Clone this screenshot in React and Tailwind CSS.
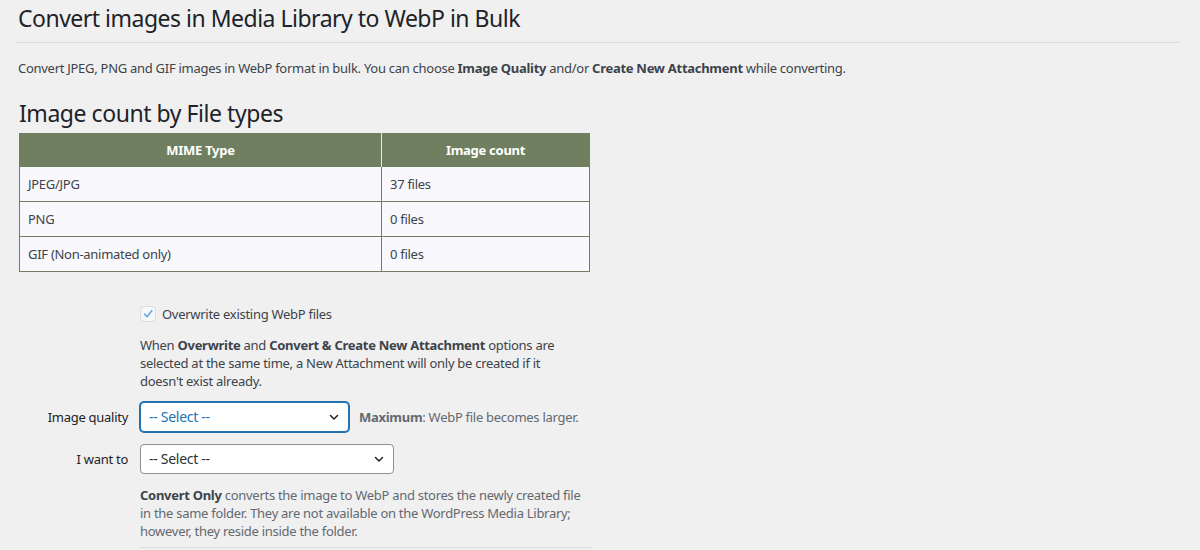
import React from 'react';

const rows = [
    { type: 'JPEG/JPG', count: '37 files' },
    { type: 'PNG', count: '0 files' },
    { type: 'GIF (Non-animated only)', count: '0 files' }
];

const Chevron = () => (
    <svg width="12" height="12" viewBox="0 0 12 12" className="absolute right-[8px] top-1/2 -translate-y-1/2">
        <path d="M2.5 4.5 L6 8 L9.5 4.5" fill="none" stroke="#1d2327" strokeWidth="1.5" strokeLinecap="round" strokeLinejoin="round" />
    </svg>
);

const SelectBox = ({ width, focused }) => (
    <div
        className={`relative h-[30px] ${width} rounded-[4px] bg-white flex items-center pl-[8px] text-[14px] ${
            focused ? 'border border-[#2271b1] shadow-[0_0_0_1px_#2271b1] text-[#2271b1]' : 'border border-[#8c8f94] text-[#2c3338]'
        }`}
    >
        -- Select --
        <Chevron />
    </div>
);

export default function App() {
    return (
        <div className="min-h-[550px] bg-[#f0f0f1] text-[#3c434a] text-[13px] leading-[18px] tracking-[-0.28px] font-['Noto_Sans',sans-serif] pl-[18px] pr-[20px]">
            <h1 className="pt-[4px] text-[23px] leading-[29px] tracking-[-0.5px] text-[#1d2327]">
                Convert images in Media Library to WebP in Bulk
            </h1>
            <hr className="mt-[9px] -ml-[3px] border-0 border-t border-[#dcdcde]" />
            <p className="mt-[16px]">
                Convert JPEG, PNG and GIF images in WebP format in bulk. You can choose <b>Image Quality</b> and/or{' '}
                <b>Create New Attachment</b> while converting.
            </p>

            <h2 className="mt-[22px] ml-[1px] text-[23px] leading-[29px] tracking-[-0.45px] text-[#1d2327]">Image count by File types</h2>

            <table className="mt-[5px] ml-[1px] w-[571px] border-collapse border border-[#6f7f5f]">
                <thead>
                    <tr className="bg-[#6f7f5f] text-white h-[33px]">
                        <th className="w-[362px] border-r border-[#e8ebe3] font-bold text-center">MIME Type</th>
                        <th className="font-bold text-center">Image count</th>
                    </tr>
                </thead>
                <tbody>
                    {rows.map((row, i) => (
                        <tr key={i} className="bg-[#f8f8fd] h-[35px] border-t border-[#6f7f5f]">
                            <td className="pl-[8px] border-r border-[#6f7f5f]">{row.type}</td>
                            <td className="pl-[8px]">{row.count}</td>
                        </tr>
                    ))}
                </tbody>
            </table>

            <div className="mt-[33px] flex">
                <div className="w-[122px] shrink-0" />
                <div className="w-[420px]">
                    <label className="flex items-center gap-[6px]">
                        <span className="w-[16px] h-[16px] rounded-[4px] border border-[#dcdcde] bg-[#f6f7f7] flex items-center justify-center">
                            <svg width="12" height="12" viewBox="0 0 12 12">
                                <path d="M2.5 6.2 L5 8.7 L9.8 2.8" fill="none" stroke="#72aee6" strokeWidth="1.8" strokeLinecap="round" strokeLinejoin="round" />
                            </svg>
                        </span>
                        <span>Overwrite existing WebP files</span>
                    </label>
                    <p className="mt-[13px]">
                        When <b>Overwrite</b> and <b>Convert &amp; Create New Attachment</b> options are selected at the same time, a New Attachment will only be created if it doesn't exist already.
                    </p>
                </div>
            </div>

            <div className="mt-[12px] flex items-center">
                <div className="w-[122px] shrink-0 pr-[12px] text-right text-[#1d2327]">Image quality</div>
                <SelectBox width="w-[209px]" focused />
                <span className="ml-[10px] text-[#646970]">
                    <b>Maximum</b>: WebP file becomes larger.
                </span>
            </div>

            <div className="mt-[12px] flex items-center">
                <div className="w-[122px] shrink-0 pr-[12px] text-right text-[#1d2327]">I want to</div>
                <SelectBox width="w-[254px]" />
            </div>

            <div className="flex">
                <div className="w-[122px] shrink-0" />
                <div className="w-[452px]">
                    <p className="mt-[12px] text-[#646970]">
                        <b className="text-[#3c434a]">Convert Only</b> converts the image to WebP and stores the newly created file in the same folder. They are not available on the WordPress Media Library; however, they reside inside the folder.
                    </p>
                    <hr className="mt-[7px] border-0 border-t border-[#dcdcde]" />
                </div>
            </div>
        </div>
    );
}
